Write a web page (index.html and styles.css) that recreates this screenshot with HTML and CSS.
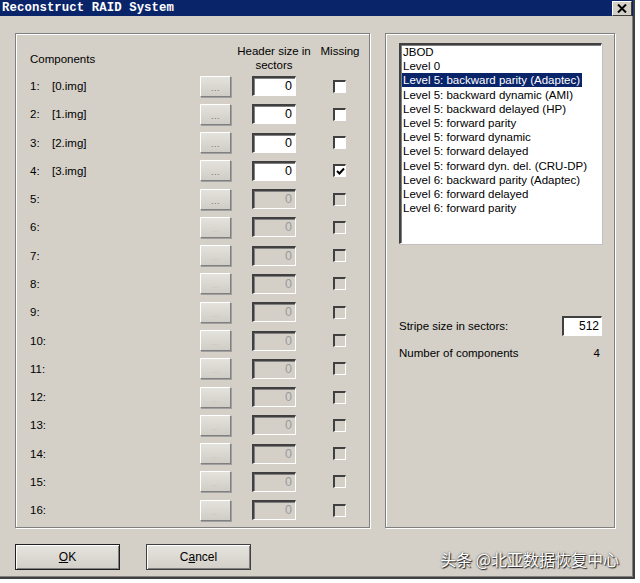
FILE: index.html
```html
<!DOCTYPE html>
<html>
<head>
<meta charset="utf-8">
<link rel="stylesheet" href="styles.css">
</head>
<body>
<div class="window">
  <div class="titlebar">
    <span class="title">Reconstruct RAID System</span>
    <span class="close"><svg width="10" height="9" viewBox="0 0 10 9"><path d="M1 0.5 L9 8.5 M9 0.5 L1 8.5" stroke="#000" stroke-width="2"/></svg></span>
  </div>
  <div class="content">
    <div class="groups">
      <div class="group left">
        <div class="head">
          <div class="h-comp">Components</div>
          <div class="h-size">Header size in<br>sectors</div>
          <div class="h-miss">Missing</div>
        </div>
        <div class="rows">
          <div class="row"><span class="num">1:</span><span class="name">[0.img]</span><span class="btn">...</span><span class="inp">0</span><span class="chk"></span></div>
          <div class="row"><span class="num">2:</span><span class="name">[1.img]</span><span class="btn">...</span><span class="inp">0</span><span class="chk"></span></div>
          <div class="row"><span class="num">3:</span><span class="name">[2.img]</span><span class="btn">...</span><span class="inp">0</span><span class="chk"></span></div>
          <div class="row"><span class="num">4:</span><span class="name">[3.img]</span><span class="btn">...</span><span class="inp">0</span><span class="chk"><svg width="9" height="9" viewBox="0 0 9 9"><path d="M1 4 L3.5 6.5 L8 1.5" stroke="#000" stroke-width="2" fill="none"/></svg></span></div>
          <div class="row off"><span class="num">5:</span><span class="name"></span><span class="btn">...</span><span class="inp">0</span><span class="chk"></span></div>
          <div class="row off dis"><span class="num">6:</span><span class="name"></span><span class="btn">...</span><span class="inp">0</span><span class="chk"></span></div>
          <div class="row off dis"><span class="num">7:</span><span class="name"></span><span class="btn">...</span><span class="inp">0</span><span class="chk"></span></div>
          <div class="row off dis"><span class="num">8:</span><span class="name"></span><span class="btn">...</span><span class="inp">0</span><span class="chk"></span></div>
          <div class="row off dis"><span class="num">9:</span><span class="name"></span><span class="btn">...</span><span class="inp">0</span><span class="chk"></span></div>
          <div class="row off dis"><span class="num">10:</span><span class="name"></span><span class="btn">...</span><span class="inp">0</span><span class="chk"></span></div>
          <div class="row off dis"><span class="num">11:</span><span class="name"></span><span class="btn">...</span><span class="inp">0</span><span class="chk"></span></div>
          <div class="row off dis"><span class="num">12:</span><span class="name"></span><span class="btn">...</span><span class="inp">0</span><span class="chk"></span></div>
          <div class="row off dis"><span class="num">13:</span><span class="name"></span><span class="btn">...</span><span class="inp">0</span><span class="chk"></span></div>
          <div class="row off dis"><span class="num">14:</span><span class="name"></span><span class="btn">...</span><span class="inp">0</span><span class="chk"></span></div>
          <div class="row off dis"><span class="num">15:</span><span class="name"></span><span class="btn">...</span><span class="inp">0</span><span class="chk"></span></div>
          <div class="row off dis"><span class="num">16:</span><span class="name"></span><span class="btn">...</span><span class="inp">0</span><span class="chk"></span></div>
        </div>
      </div>
      <div class="group right">
        <div class="listbox">
          <div class="item">JBOD</div>
          <div class="item">Level 0</div>
          <div class="item"><span class="sel">Level 5: backward parity (Adaptec)</span></div>
          <div class="item">Level 5: backward dynamic (AMI)</div>
          <div class="item">Level 5: backward delayed (HP)</div>
          <div class="item">Level 5: forward parity</div>
          <div class="item">Level 5: forward dynamic</div>
          <div class="item">Level 5: forward delayed</div>
          <div class="item">Level 5: forward dyn. del. (CRU-DP)</div>
          <div class="item">Level 6: backward parity (Adaptec)</div>
          <div class="item">Level 6: forward delayed</div>
          <div class="item">Level 6: forward parity</div>
        </div>
        <div class="stripe"><span>Stripe size in sectors:</span><span class="sinp">512</span></div>
        <div class="count"><span>Number of components</span><span class="cval">4</span></div>
      </div>
    </div>
    <div class="buttons">
      <div class="pbtn default"><span><u>O</u>K</span></div>
      <div class="pbtn"><span>C<u>a</u>ncel</span></div>
    </div>
  </div>
  <div class="watermark">头条 @北亚数据恢复中心</div>
</div>
</body>
</html>
```

FILE: styles.css
```css
html, body { margin: 0; padding: 0; background: #ffffff; }
body { font-family: "Liberation Sans", Arial, sans-serif; font-size: 11.5px; color: #000; }
.window {
  position: relative;
  width: 633px; height: 577px;
  background: #d4d0c8;
  border-right: 2px solid #404040;
  border-bottom: 2px solid #404040;
  box-shadow: inset -1px -1px 0 #808080;
}
.titlebar {
  height: 16px;
  background: #0a246a;
  display: flex; align-items: center; justify-content: space-between;
  padding-left: 2px;
}
.title {
  font-family: "Liberation Mono", "Courier New", monospace;
  font-weight: bold; font-size: 12.3px; color: #fff; letter-spacing: 0.1px;
}
.close {
  width: 18px; height: 13px; margin-right: 1px;
  background: #d4d0c8;
  border-top: 1px solid #fff; border-left: 1px solid #fff;
  border-right: 1px solid #404040; border-bottom: 1px solid #404040;
  display: flex; align-items: center; justify-content: center;
}
.content { padding: 17px 0 0 15px; }
.groups { display: flex; gap: 15px; }
.group {
  height: 493px;
  border: 1px solid #808080;
  box-shadow: inset 1px 1px 0 #fff, 1px 1px 0 #fff;
}
.group.left { width: 353px; }
.group.right { padding: 0 12px 0 13px; box-sizing: border-box; width: 230px; height: 495px; }
.head { display: flex; height: 28px; padding-top: 10px; padding-left: 14px; line-height: 14px; }
.h-comp { width: 170px; align-self: center; padding-top: 2px; }
.h-size { width: 88px; margin-left: 30px; text-align: center; }
.h-miss { width: 44px; text-align: center; }
.rows { display: grid; grid-auto-rows: 28.27px; padding-left: 14px; }
.row { display: flex; align-items: center; }
.num { width: 22px; }
.name { width: 148px; }
.btn {
  width: 31px; height: 21px; box-sizing: border-box;
  border: 1px solid; border-color: #fff #808080 #808080 #fff;
  box-shadow: 1px 1px 0 #a0a0a0;
  background: linear-gradient(#e4e2dc, #d0cdc6);
  color: #707070; font-size: 9px; text-align: center; line-height: 23px; letter-spacing: 0.5px;
}
.dis .btn { color: #c6c3bc; }
.inp {
  width: 44px; height: 20px; box-sizing: border-box; margin-left: 21px;
  border-top: 2px solid #404040; border-left: 2px solid #404040;
  border-right: 1px solid #fff; border-bottom: 1px solid #fff;
  box-shadow: inset 1px 1px 0 #808080;
  background: #fff; text-align: right; padding-right: 3px; font-size: 12.5px; line-height: 17px;
}
.off .inp { background: #d4d0c8; color: #9a9a9a; }
.chk {
  width: 13px; height: 13px; box-sizing: border-box; margin-left: 37px;
  border-top: 2px solid #404040; border-left: 2px solid #404040;
  border-right: 1px solid #fff; border-bottom: 1px solid #fff;
  background: #fff; display: flex; align-items: center; justify-content: center;
}
.off .chk { background: #d4d0c8; }
.listbox {
  margin-top: 9px; height: 201px; box-sizing: border-box;
  border-top: 2px solid #404040; border-left: 2px solid #404040;
  border-right: 1px solid #fff; border-bottom: 1px solid #fff;
  box-shadow: inset 1px 1px 0 #808080, 1px 1px 0 #c0c0c0;
  background: #fff; padding: 0 0 0 2px;
}
.item { height: 14.2px; line-height: 14px; white-space: nowrap; }
.sel { display: inline-block; background: #0a246a; color: #fff; padding: 0 2px 0 1px; margin-left: -1px; }
.stripe { display: flex; justify-content: space-between; align-items: center; margin-top: 72px; height: 20px; }
.sinp {
  width: 40px; height: 20px; box-sizing: border-box;
  border-top: 2px solid #404040; border-left: 2px solid #404040;
  border-right: 1px solid #fff; border-bottom: 1px solid #fff;
  background: #fff; text-align: right; padding-right: 2px; font-size: 12px; line-height: 17px;
}
.count { display: flex; justify-content: space-between; margin-top: 11px; padding-right: 2px; }
.buttons { display: flex; gap: 26px; margin-top: 16px; }
.pbtn {
  width: 105px; height: 26px; box-sizing: border-box;
  border: 1px solid #404040;
  display: flex; align-items: center; justify-content: center;
  background: linear-gradient(#e6e4de, #d2cfc8);
  box-shadow: inset 1px 1px 0 #fff, inset -1px -1px 0 #808080;
  font-size: 12px;
}
.pbtn.default { border: 1px solid #202020; }
.watermark {
  position: absolute; right: 14px; bottom: 6px;
  font-family: "Noto Sans CJK SC", sans-serif; font-size: 16px; color: #fff;
  text-shadow: 1px 1px 1px #202020, 0 0 2px #404040;
}
```
